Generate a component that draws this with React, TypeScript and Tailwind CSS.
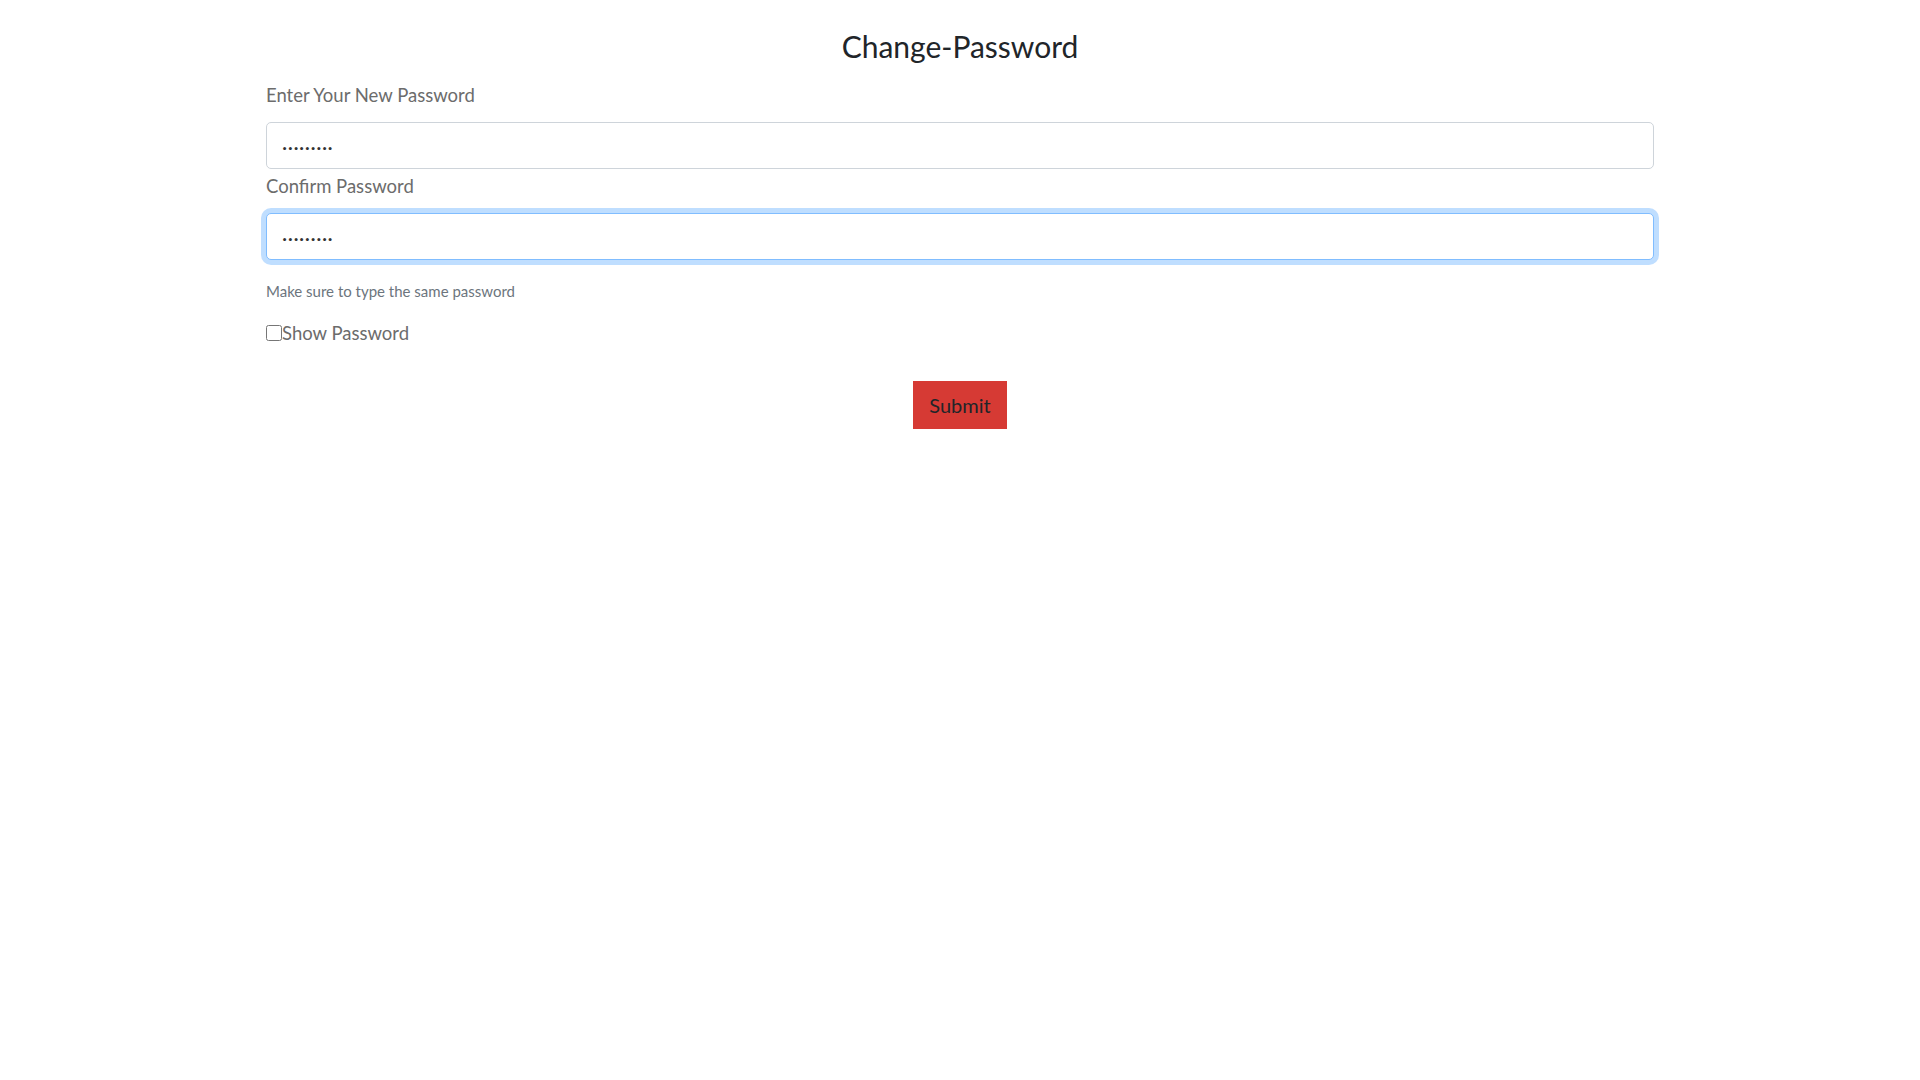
import React from "react";

const App = (): React.JSX.Element => {
  return (
    <div className="min-h-screen w-full bg-white font-['Lato','Open_Sans',sans-serif]">
      <div className="mx-auto flex w-[1388px] flex-col">
        <h4 className="mt-[28px] text-center text-[30px] leading-[36px] text-[#212529]">Change-Password</h4>

        <label className="mt-[16px] text-[18.5px] leading-[30px] text-[#6c6c6c]">Enter Your New Password</label>
        <input
          type="text"
          readOnly
          value="·········"
          className="mt-[12px] h-[47px] w-full rounded-[5px] border border-[#ced4da] bg-white px-[15px] text-[20px] tracking-[0.5px] text-[#333] outline-none"
        />

        <label className="mt-[2px] text-[18.5px] leading-[30px] text-[#6c6c6c]">Confirm Password</label>
        <input
          type="text"
          readOnly
          value="·········"
          className="mt-[12px] h-[47px] w-full rounded-[5px] border border-[#80bdff] bg-white px-[15px] text-[20px] tracking-[0.5px] text-[#333] shadow-[0_0_0_5px_rgba(0,123,255,0.25)] outline-none"
        />

        <small className="mt-[19px] text-[15px] leading-[24px] text-[#6c757d]">Make sure to type the same password</small>

        <label className="mt-[15px] flex items-center text-[18.5px] leading-[30px] text-[#6c6c6c]">
          <input type="checkbox" className="m-0 h-[16px] w-[16px]" />
          Show Password
        </label>

        <div className="mt-[33px] flex justify-center">
          <button
            type="button"
            className="h-[48px] w-[94px] bg-[#d63a34] text-[20px] text-[#212529]"
          >
            Submit
          </button>
        </div>
      </div>
    </div>
  );
};

export default App;
